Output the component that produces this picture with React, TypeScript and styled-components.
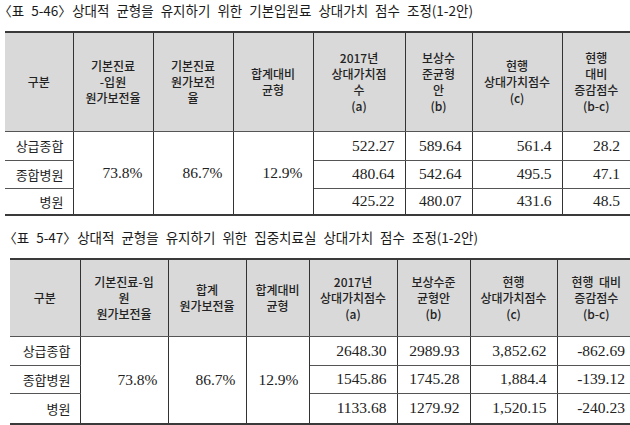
import React, { FC } from "react";
import styled, { createGlobalStyle } from "styled-components";

const GlobalStyle = createGlobalStyle`
    html, body {
        margin: 0;
        padding: 0;
        background: #ffffff;
        overflow: hidden;
    }
    body {
        width: 630px;
        height: 425px;
        font-family: "Noto Sans CJK KR", "Noto Sans", sans-serif;
        color: #222;
    }
`;

interface RowData {
    label: string;
    values: string[];
}

interface TableSpec {
    title: string;
    indent: number;
    widths: number[];
    headers: string[][];
    shared: string[];
    rows: RowData[];
    headHeight: number;
    rowHeights: number[];
    titleGap: number;
}

const specs: TableSpec[] = [
    {
        title: "〈표 5-46〉 상대적 균형을 유지하기 위한 기본입원료 상대가치 점수 조정(1-2안)",
        indent: 5,
        widths: [68, 80, 80, 80, 92, 67, 90, 68],
        headers: [
            ["구분"],
            ["기본진료", "-입원", "원가보전율"],
            ["기본진료", "원가보전", "율"],
            ["합계대비", "균형"],
            ["2017년", "상대가치점", "수", "(a)"],
            ["보상수", "준균형", "안", "(b)"],
            ["현행", "상대가치점수", "(c)"],
            ["현행", "대비", "증감점수", "(b-c)"],
        ],
        shared: ["73.8%", "86.7%", "12.9%"],
        rows: [
            { label: "상급종합", values: ["522.27", "589.64", "561.4", "28.2"] },
            { label: "종합병원", values: ["480.64", "542.64", "495.5", "47.1"] },
            { label: "병원", values: ["425.22", "480.07", "431.6", "48.5"] },
        ],
        headHeight: 99,
        rowHeights: [29, 28, 27],
        titleGap: 0,
    },
    {
        title: "〈표 5-47〉 상대적 균형을 유지하기 위한 집중치료실 상대가치 점수 조정(1-2안)",
        indent: 10,
        widths: [70, 88, 78, 63, 88, 73, 87, 78],
        headers: [
            ["구분"],
            ["기본진료-입", "원", "원가보전율"],
            ["합계", "원가보전율"],
            ["합계대비", "균형"],
            ["2017년", "상대가치점수", "(a)"],
            ["보상수준", "균형안", "(b)"],
            ["현행", "상대가치점수", "(c)"],
            ["현행  대비", "증감점수", "(b-c)"],
        ],
        shared: ["73.8%", "86.7%", "12.9%"],
        rows: [
            { label: "상급종합", values: ["2648.30", "2989.93", "3,852.62", "-862.69"] },
            { label: "종합병원", values: ["1545.86", "1745.28", "1,884.4", "-139.12"] },
            { label: "병원", values: ["1133.68", "1279.92", "1,520.15", "-240.23"] },
        ],
        headHeight: 77,
        rowHeights: [29, 28, 31],
        titleGap: 11,
    },
];

const ScoreTable: FC<{ spec: TableSpec }> = ({ spec }) => {
    const total = spec.widths.reduce((a, b) => a + b, 0);

    return (
        <Section $indent={spec.indent} $gap={spec.titleGap}>
            <Title>{spec.title}</Title>
            <Table style={{ width: total }}>
                <colgroup>
                    {spec.widths.map((w, i) => (
                        <col key={i} style={{ width: w }} />
                    ))}
                </colgroup>
                <thead>
                    <tr style={{ height: spec.headHeight }}>
                        {spec.headers.map((lines, i) => (
                            <HeadCell key={i} $last={i === spec.headers.length - 1}>
                                {lines.map((l, j) => (
                                    <HeadLine key={j}>{l}</HeadLine>
                                ))}
                            </HeadCell>
                        ))}
                    </tr>
                </thead>
                <tbody>
                    {spec.rows.map((row, r) => (
                        <tr key={row.label} style={{ height: spec.rowHeights[r] }}>
                            <LabelCell>{row.label}</LabelCell>
                            {r === 0 &&
                                spec.shared.map((s) => (
                                    <NumCell key={s} rowSpan={3}>
                                        {s}
                                    </NumCell>
                                ))}
                            {row.values.map((v, i) => (
                                <NumCell key={i} $last={i === row.values.length - 1}>
                                    {v}
                                </NumCell>
                            ))}
                        </tr>
                    ))}
                </tbody>
            </Table>
        </Section>
    );
};

const App: FC = () => {
    return (
        <Page>
            <GlobalStyle />
            {specs.map((s) => (
                <ScoreTable key={s.title} spec={s} />
            ))}
        </Page>
    );
};

export default App;

const Page = styled.div`
    display: flex;
    flex-direction: column;
    width: 660px;
`;

const Section = styled.section<{ $indent: number; $gap: number }>`
    display: flex;
    flex-direction: column;
    align-items: flex-start;
    padding-left: ${(p) => p.$indent}px;
    margin-top: ${(p) => p.$gap}px;
`;

const Title = styled.div`
    font-size: 13.5px;
    line-height: 20px;
    height: 20px;
    word-spacing: 4px;
    font-feature-settings: "halt";
    color: #1a1a1a;
    white-space: nowrap;
    margin-bottom: 11px;
`;

const Table = styled.table`
    border-collapse: collapse;
    table-layout: fixed;
    border-top: 2px solid #3a3a3a;
    border-bottom: 2px solid #3a3a3a;
`;

const HeadCell = styled.th<{ $last?: boolean }>`
    background: #d9d9d9;
    font-weight: 500;
    font-size: 12px;
    line-height: 16px;
    color: #222;
    text-align: center;
    vertical-align: middle;
    padding: 0 2px;
    border-right: ${(p) => (p.$last ? "none" : "1px solid #333")};
    border-bottom: 1px solid #555;
`;

const HeadLine = styled.div`
    white-space: pre;
`;

const LabelCell = styled.td`
    font-size: 13px;
    text-align: right;
    padding: 0 9px 0 0;
    color: #222;
    border-right: 1px solid #333;
    border-bottom: 1px solid #555;
    white-space: nowrap;
`;

const NumCell = styled.td<{ $last?: boolean }>`
    font-family: "Liberation Serif", "Noto Sans CJK KR", serif;
    font-size: 15.5px;
    text-align: right;
    padding: 0 10px 0 0;
    color: #222;
    border-right: ${(p) => (p.$last ? "none" : "1px solid #333")};
    border-bottom: 1px solid #555;
    white-space: nowrap;
`;
